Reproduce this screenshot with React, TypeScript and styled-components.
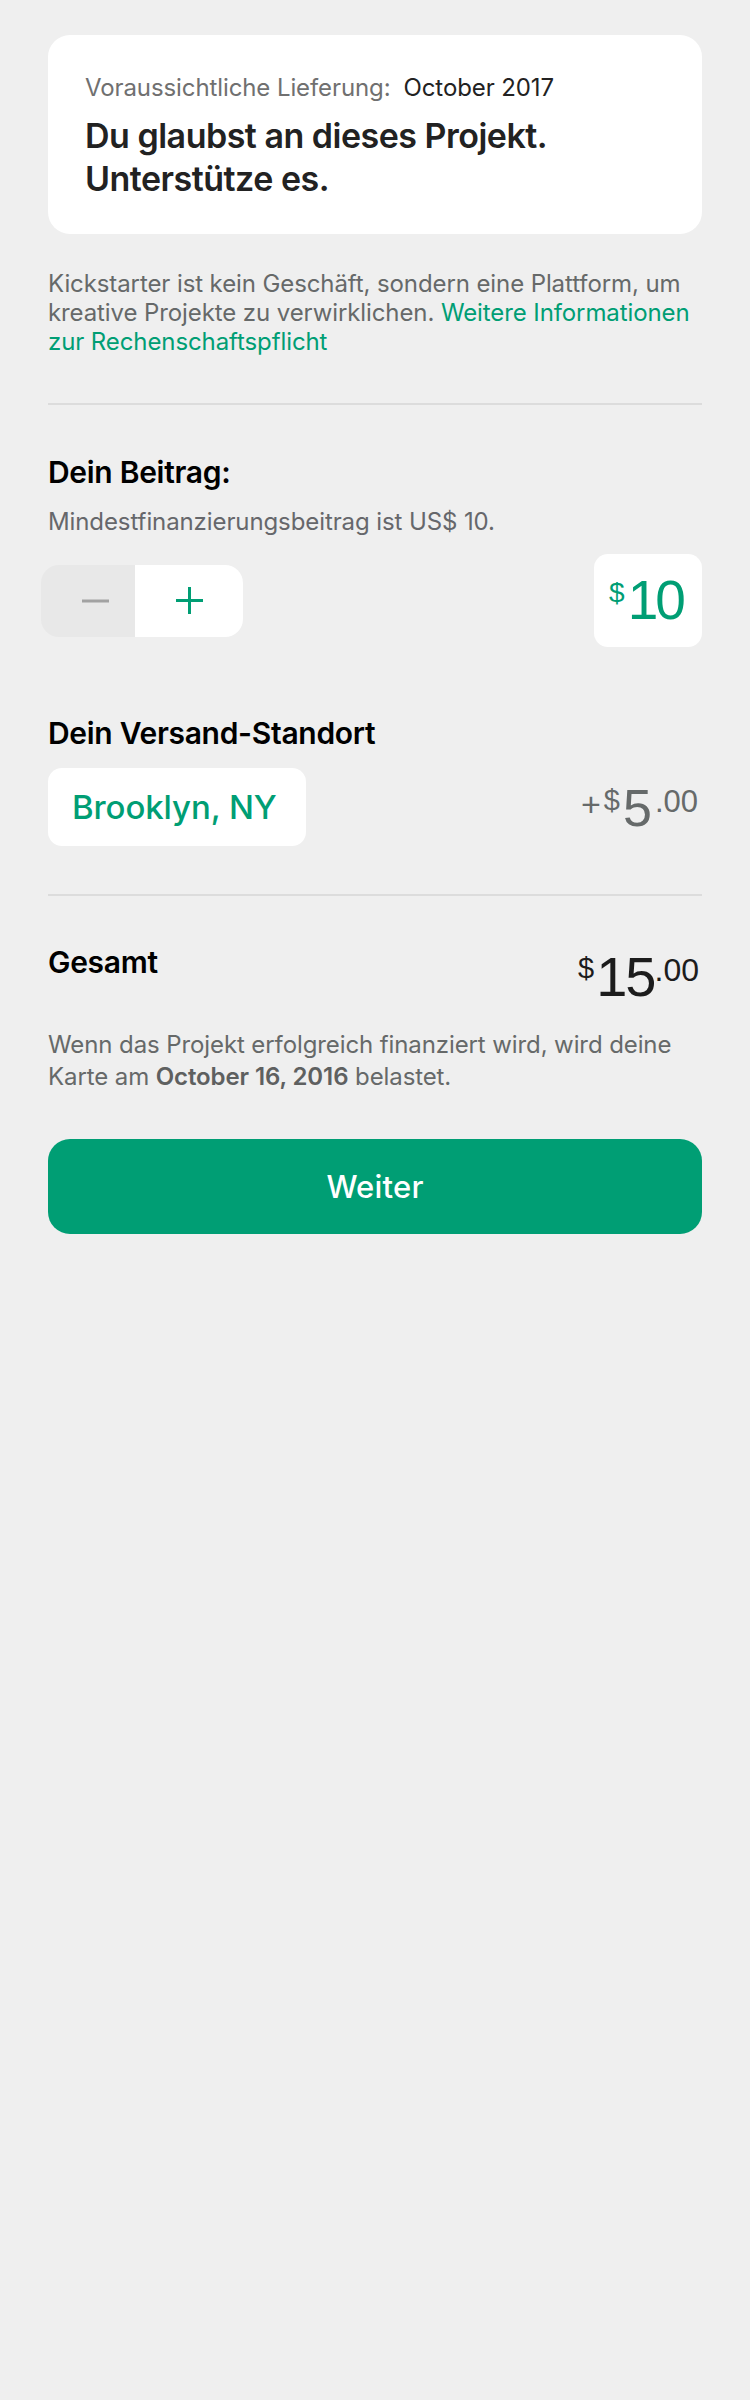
import React from "react";
import styled, { createGlobalStyle } from "styled-components";

const GREEN = "#009e74";

const GlobalStyle = createGlobalStyle`
  html, body { margin: 0; padding: 0; background: #efefef; }
  body {
    font-family: Inter, "Noto Sans", sans-serif;
    -webkit-font-smoothing: antialiased;
  }
`;

const Page = styled.main`
  min-height: 2400px;
  box-sizing: border-box;
  padding: 35px 48px 0;
  display: flex;
  flex-direction: column;
`;

const Card = styled.section`
  background: #ffffff;
  border-radius: 22px;
  padding: 37px 37px 34px;
  display: flex;
  flex-direction: column;
  gap: 10px;
`;

const Caption = styled.div`
  display: flex;
  gap: 13px;
  font-size: 24px;
  line-height: 32px;
  letter-spacing: -0.1px;
`;

const CaptionLabel = styled.span`
  color: #707070;
`;

const CaptionValue = styled.span`
  color: #222222;
`;

const Headline = styled.h1`
  margin: 0;
  font-size: 34px;
  line-height: 43px;
  font-weight: 600;
  color: #222222;
  letter-spacing: -0.5px;
`;

const Note = styled.p<{ $lh: number; $mt: number }>`
  margin: ${(p) => p.$mt}px 0 0;
  font-size: 24px;
  line-height: ${(p) => p.$lh}px;
  color: #666969;
  letter-spacing: -0.1px;
`;

const Link = styled.a`
  color: ${GREEN};
  text-decoration: none;
`;

const Strong = styled.strong`
  font-weight: 600;
  color: #5e6060;
`;

const Divider = styled.hr<{ $mt: number }>`
  margin: ${(p) => p.$mt}px 0 0;
  border: none;
  height: 2px;
  background: #dcdcdc;
`;

const SectionTitle = styled.h2<{ $mt: number }>`
  margin: ${(p) => p.$mt}px 0 0;
  font-size: 30px;
  line-height: 34px;
  font-weight: 600;
  color: #000000;
  letter-spacing: -0.3px;
`;

const Hint = styled.p`
  margin: 18px 0 0;
  font-size: 24px;
  line-height: 29px;
  color: #66676b;
  letter-spacing: -0.1px;
`;

const PledgeRow = styled.div`
  margin-top: 18px;
  display: flex;
  justify-content: space-between;
  align-items: center;
`;

const Stepper = styled.div`
  margin-left: -7px;
  height: 72px;
  display: flex;
  border-radius: 18px;
  overflow: hidden;
`;

const StepButton = styled.button<{ $kind: "minus" | "plus" }>`
  border: none;
  padding: 0 0 0 ${(p) => (p.$kind === "minus" ? 14 : 0)}px;
  width: ${(p) => (p.$kind === "minus" ? 94 : 108)}px;
  height: 100%;
  background: ${(p) => (p.$kind === "minus" ? "#e8e8e8" : "#ffffff")};
  color: ${(p) => (p.$kind === "minus" ? "#a2a2a2" : GREEN)};
  display: flex;
  align-items: center;
  justify-content: center;
  cursor: pointer;
`;

const AmountBox = styled.div`
  width: 108px;
  height: 93px;
  box-sizing: border-box;
  padding-right: 4px;
  background: #ffffff;
  border-radius: 14px;
  display: flex;
  align-items: center;
  justify-content: center;
`;

const Price = styled.div<{ $color: string }>`
  display: inline-flex;
  align-items: flex-start;
  color: ${(p) => p.$color};
  font-family: "Liberation Sans", Arial, sans-serif;
  line-height: 1;
`;

const PricePart = styled.span<{ $size: number; $mt?: number; $mr?: number; $ls?: number }>`
  display: block;
  font-size: ${(p) => p.$size}px;
  line-height: 1;
  letter-spacing: ${(p) => p.$ls ?? 0}px;
  margin-top: ${(p) => p.$mt ?? 0}px;
  margin-right: ${(p) => p.$mr ?? 0}px;
`;

const ShippingRow = styled.div`
  margin-top: 18px;
  display: flex;
  justify-content: space-between;
  align-items: flex-start;
`;

const LocationButton = styled.button`
  width: 258px;
  height: 78px;
  border: none;
  border-radius: 14px;
  background: #ffffff;
  color: ${GREEN};
  font-family: Inter, "Noto Sans", sans-serif;
  font-size: 33px;
  font-weight: 500;
  letter-spacing: -0.1px;
  text-align: left;
  padding: 0 0 0 24px;
  cursor: pointer;
`;

const ShippingPrice = styled.div`
  margin-top: 14px;
`;

const TotalRow = styled.div`
  margin-top: 49px;
  display: flex;
  justify-content: space-between;
  align-items: flex-start;
`;

const TotalPrice = styled.div`
  margin-top: 4px;
`;

const ContinueButton = styled.button`
  margin-top: 46px;
  height: 95px;
  border: none;
  border-radius: 22px;
  background: ${GREEN};
  color: #ffffff;
  font-family: Inter, "Noto Sans", sans-serif;
  font-size: 31px;
  font-weight: 500;
  letter-spacing: 0.2px;
  cursor: pointer;
`;

const MinusIcon = () => (
  <svg width="27" height="4" viewBox="0 0 27 4" aria-hidden="true">
    <rect x="0" y="0.5" width="27" height="3" fill="currentColor" />
  </svg>
);

const PlusIcon = () => (
  <svg width="27" height="27" viewBox="0 0 27 27" aria-hidden="true">
    <rect x="0" y="12" width="27" height="3" fill="currentColor" />
    <rect x="12" y="0" width="3" height="27" fill="currentColor" />
  </svg>
);

export default function App() {
  return (
    <>
      <GlobalStyle />
      <Page>
        <Card>
          <Caption>
            <CaptionLabel>Voraussichtliche Lieferung:</CaptionLabel>
            <CaptionValue>October 2017</CaptionValue>
          </Caption>
          <Headline>
            Du glaubst an dieses Projekt.
            <br />
            Unterstütze es.
          </Headline>
        </Card>

        <Note $lh={29} $mt={35}>
          Kickstarter ist kein Geschäft, sondern eine Plattform, um kreative
          Projekte zu verwirklichen.{" "}
          <Link href="#">Weitere Informationen zur Rechenschaftspflicht</Link>
        </Note>

        <Divider $mt={47} />

        <SectionTitle $mt={50}>Dein Beitrag:</SectionTitle>
        <Hint>Mindestfinanzierungsbeitrag ist US$ 10.</Hint>

        <PledgeRow>
          <Stepper>
            <StepButton $kind="minus" aria-label="Weniger">
              <MinusIcon />
            </StepButton>
            <StepButton $kind="plus" aria-label="Mehr">
              <PlusIcon />
            </StepButton>
          </Stepper>
          <AmountBox>
            <Price $color={GREEN}>
              <PricePart $size={28} $mt={6} $mr={3}>$</PricePart>
              <PricePart $size={55} $ls={-3}>10</PricePart>
            </Price>
          </AmountBox>
        </PledgeRow>

        <SectionTitle $mt={69}>Dein Versand-Standort</SectionTitle>
        <ShippingRow>
          <LocationButton>Brooklyn, NY</LocationButton>
          <ShippingPrice>
            <Price $color="#666a6a">
              <PricePart $size={34} $mt={5} $mr={3}>+</PricePart>
              <PricePart $size={29} $mt={4} $mr={3}>$</PricePart>
              <PricePart $size={52} $mr={3}>5</PricePart>
              <PricePart $size={31} $mt={4} $mr={4}>.00</PricePart>
            </Price>
          </ShippingPrice>
        </ShippingRow>

        <Divider $mt={48} />

        <TotalRow>
          <SectionTitle $mt={0}>Gesamt</SectionTitle>
          <TotalPrice>
            <Price $color="#1c1c1c">
              <PricePart $size={29} $mt={5} $mr={2}>$</PricePart>
              <PricePart $size={56} $ls={-2}>15</PricePart>
              <PricePart $size={32} $mt={5} $mr={3}>.00</PricePart>
            </Price>
          </TotalPrice>
        </TotalRow>

        <Note $lh={32} $mt={24}>
          Wenn das Projekt erfolgreich finanziert wird, wird deine Karte am{" "}
          <Strong>October 16, 2016</Strong> belastet.
        </Note>

        <ContinueButton>Weiter</ContinueButton>
      </Page>
    </>
  );
}
